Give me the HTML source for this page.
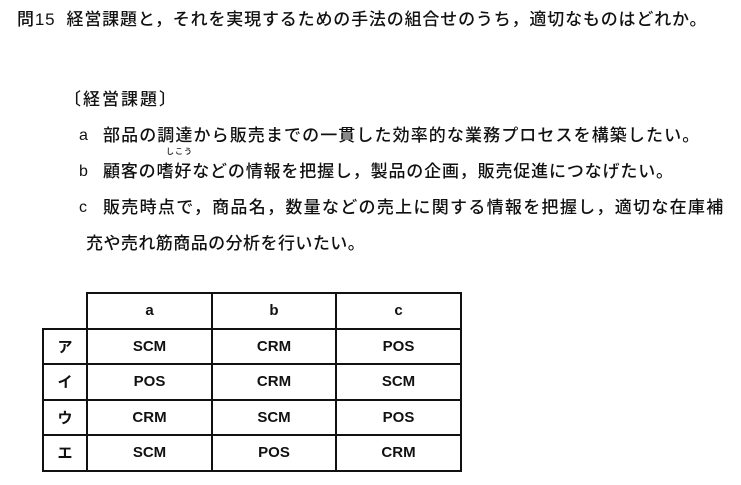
<!DOCTYPE html>
<html><head><meta charset="utf-8"><style>
body{margin:0;width:741px;height:485px;background:#fff;position:relative;overflow:hidden;font-family:"Liberation Sans","Noto Sans CJK JP",sans-serif;color:#111;font-weight:500}
.l{position:absolute;font-size:17px;line-height:20px;white-space:nowrap}
.lab{position:absolute;font-size:16px;line-height:20px}
table{position:absolute;left:42px;top:292px;border-collapse:collapse;font-size:15px;font-weight:bold}
td{border:2px solid #111;text-align:center;height:33.5px;padding:0}
td.e{border:none;border-right:2px solid #111;border-bottom:2px solid #111}
</style></head><body>
<div class="l" style="left:17px;top:10px;letter-spacing:0.83px">問15&nbsp;&nbsp;経営課題と，それを実現するための手法の組合せのうち，適切なものはどれか。</div>
<div class="l" style="left:64px;top:90px;letter-spacing:2px">〔経営課題〕</div>
<div class="lab" style="left:79px;top:126px">a</div>
<div class="l" style="left:103px;top:126px;letter-spacing:1.1px">部品の調達から販売までの一貫した効率的な業務プロセスを構築したい。</div>
<div style="position:absolute;left:166px;top:146px;font-size:8px;letter-spacing:1px">しこう</div>
<div class="lab" style="left:79px;top:162px">b</div>
<div class="l" style="left:103px;top:162px;letter-spacing:0.84px">顧客の嗜好などの情報を把握し，製品の企画，販売促進につなげたい。</div>
<div class="lab" style="left:79px;top:198px">c</div>
<div class="l" style="left:103px;top:198px;letter-spacing:1.3px">販売時点で，商品名，数量などの売上に関する情報を把握し，適切な在庫補</div>
<div class="l" style="left:86px;top:234px;letter-spacing:0.45px">充や売れ筋商品の分析を行いたい。</div>
<table>
<tr><td class="e" style="width:43px;height:34px"></td><td style="width:123px">a</td><td style="width:122px">b</td><td style="width:123px">c</td></tr>
<tr><td>ア</td><td>SCM</td><td>CRM</td><td>POS</td></tr>
<tr><td>イ</td><td>POS</td><td>CRM</td><td>SCM</td></tr>
<tr><td>ウ</td><td>CRM</td><td>SCM</td><td>POS</td></tr>
<tr><td>エ</td><td>SCM</td><td>POS</td><td>CRM</td></tr>
</table>
</body></html>
